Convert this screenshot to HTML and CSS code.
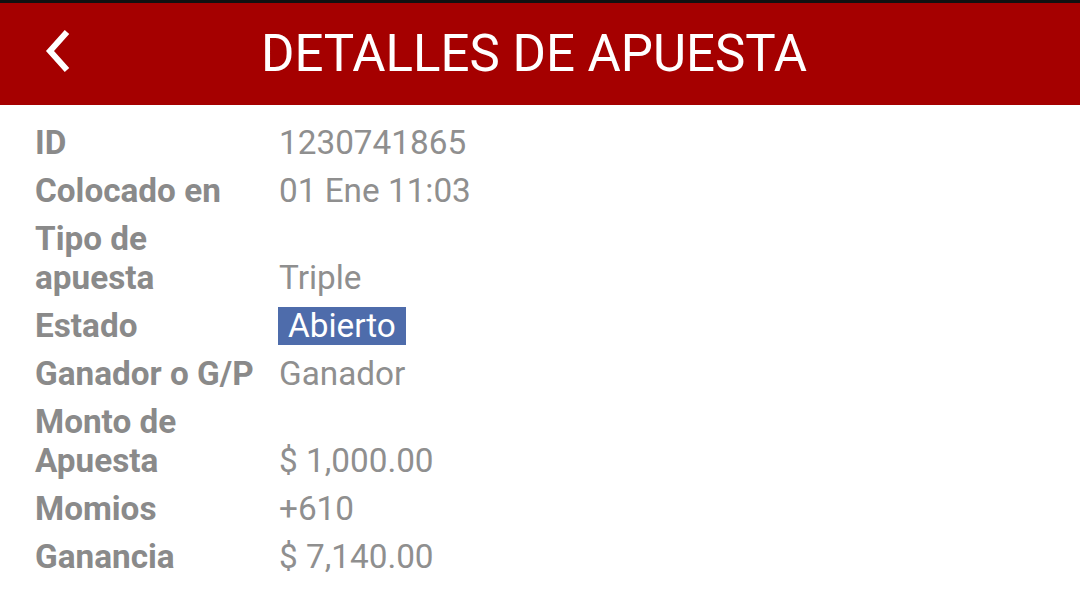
FILE: index.html
```html
<!DOCTYPE html>
<html lang="es">
<head>
<meta charset="utf-8">
<link rel="stylesheet" href="styles.css">
</head>
<body>
<div class="topbar"></div>
<header class="header">
  <div class="back">
    <svg width="30" height="44" viewBox="0 0 30 44"><polyline points="23,3 6,22 23,41" fill="none" stroke="#fff" stroke-width="6" stroke-linejoin="miter" stroke-linecap="butt"/></svg>
  </div>
  <h1 class="title">DETALLES DE APUESTA</h1>
</header>
<main class="details">
  <div class="row"><div class="label">ID</div><div class="value">1230741865</div></div>
  <div class="row"><div class="label">Colocado en</div><div class="value">01 Ene 11:03</div></div>
  <div class="row"><div class="label">Tipo de<br>apuesta</div><div class="value">Triple</div></div>
  <div class="row"><div class="label">Estado</div><div class="value"><span class="badge">Abierto</span></div></div>
  <div class="row"><div class="label">Ganador o G/P</div><div class="value">Ganador</div></div>
  <div class="row"><div class="label">Monto de<br>Apuesta</div><div class="value">$ 1,000.00</div></div>
  <div class="row"><div class="label">Momios</div><div class="value">+610</div></div>
  <div class="row"><div class="label">Ganancia</div><div class="value">$ 7,140.00</div></div>
</main>
</body>
</html>
```
FILE: styles.css
```css
html, body {
  margin: 0;
  padding: 0;
  background: #ffffff;
  font-family: Roboto, "Liberation Sans", sans-serif;
}
.topbar {
  height: 3px;
  background: #111;
}
.header {
  position: relative;
  height: 102px;
  background: #a50000;
  display: flex;
  align-items: center;
  justify-content: center;
}
.back {
  position: absolute;
  left: 44px;
  top: 26px;
  width: 30px;
  height: 44px;
}
.back svg { display: block; }
.title {
  margin: 0 12px 0 0;
  color: #ffffff;
  font-weight: 400;
  font-size: 51px;
  line-height: 1;
  padding-top: 0;
  padding-bottom: 2px;
}
.details {
  padding: 13px 0 0 35px;
}
.row {
  display: grid;
  grid-template-columns: 244px 1fr;
  align-items: end;
  padding: 4.5px 0;
  font-size: 33.3px;
  line-height: 39px;
}
.label {
  color: #8a8a8a;
  font-weight: 700;
}
.value {
  color: #8f8f8f;
  font-weight: 400;
}
.badge {
  display: inline-block;
  background: #4e6cab;
  color: #ffffff;
  padding: 0 10px 0 10px;
  line-height: 38px;
  margin-left: -1px;
}
```
